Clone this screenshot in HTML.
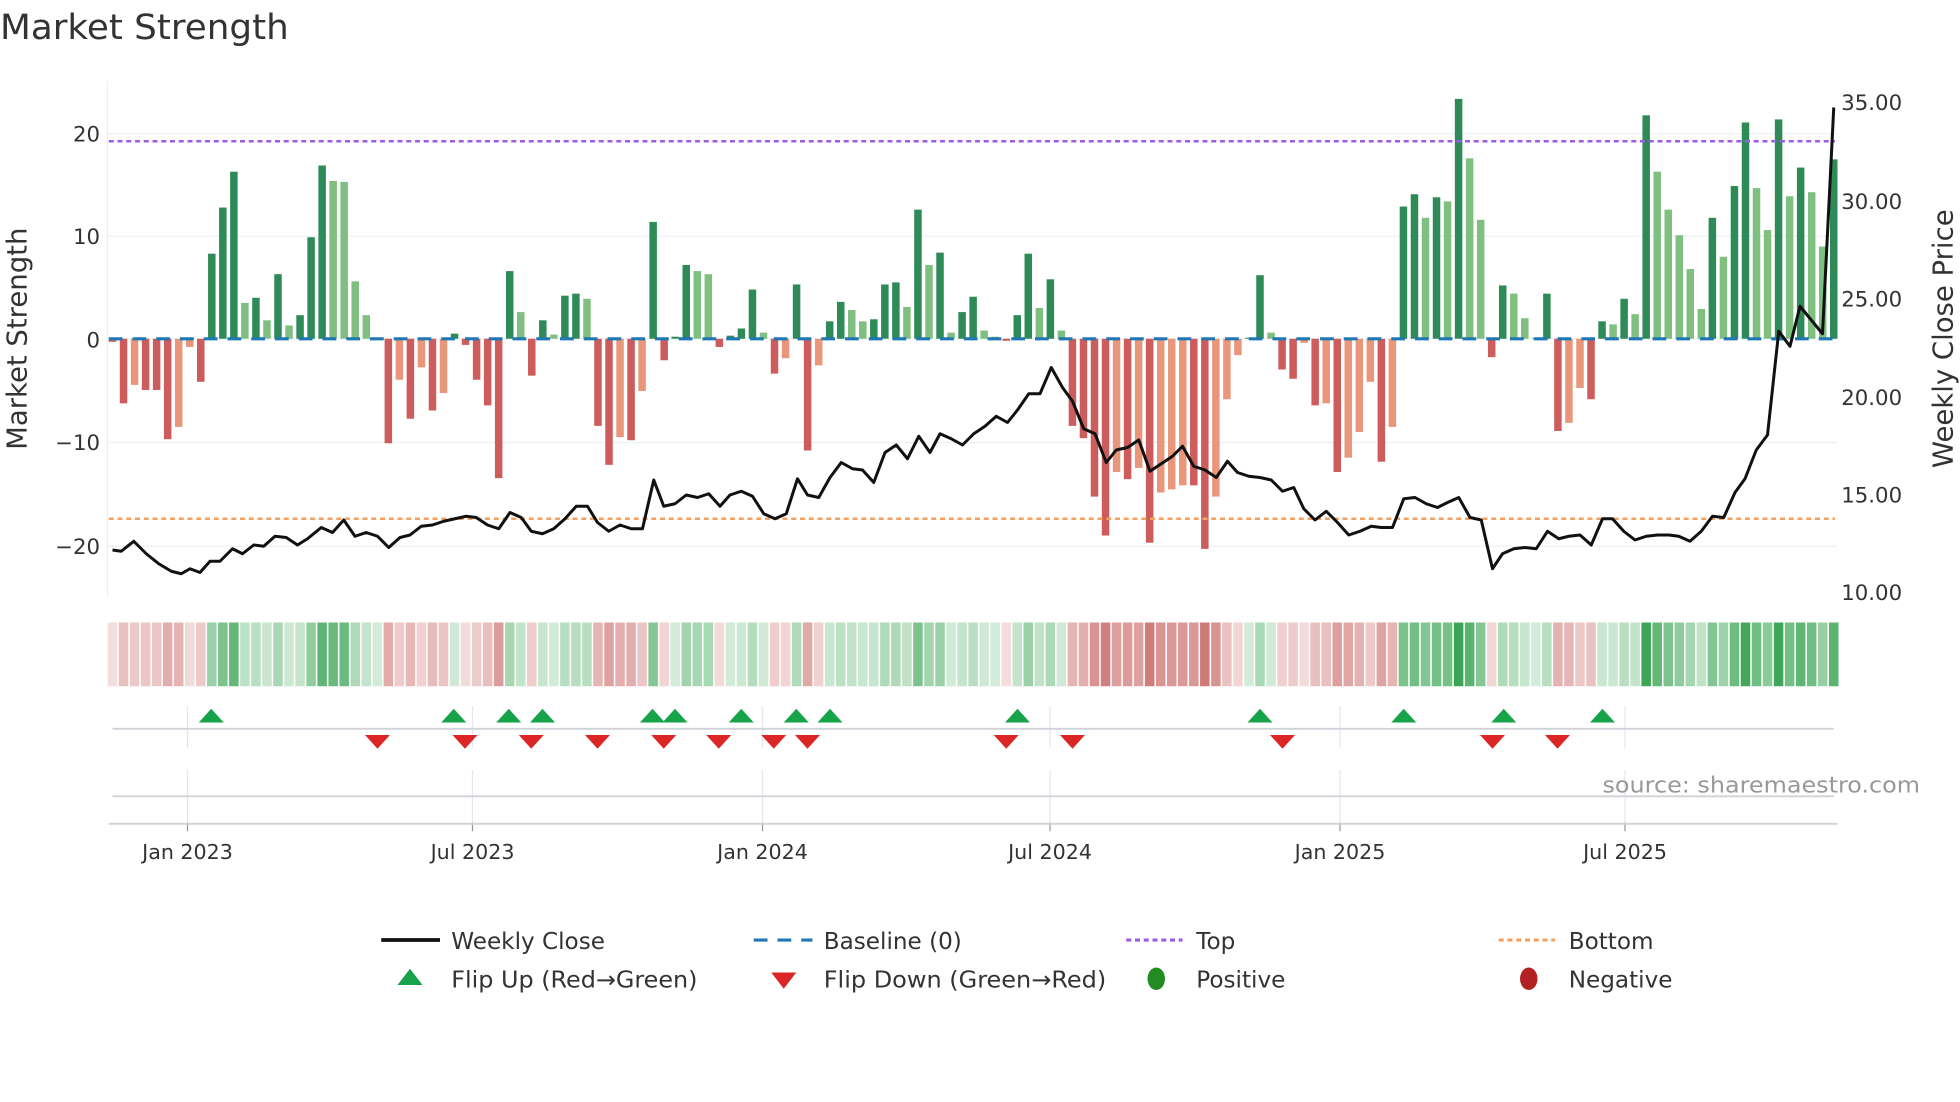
<!DOCTYPE html>
<html><head><meta charset="utf-8"><style>
html,body{margin:0;padding:0;background:#fff;overflow:hidden}
svg{display:block}
text{font-family:"DejaVu Sans","Liberation Sans",sans-serif;fill:#333}
</style></head><body>
<svg id="s" width="1960" height="1102" viewBox="0 0 1568 881.6" xmlns="http://www.w3.org/2000/svg">
<rect width="1568" height="882" fill="#fff"/>
<text x="0" y="31" font-size="28" textLength="231" lengthAdjust="spacingAndGlyphs">Market Strength</text>
<g id="grid"></g>
<g id="bars"></g>
<g id="heat"></g>
<g id="lines"></g>
<g id="marks"></g>
<g font-size="17">
<text x="80" y="113" text-anchor="end">20</text>
<text x="80" y="195" text-anchor="end">10</text>
<text x="80" y="278" text-anchor="end">0</text>
<text x="80" y="360" text-anchor="end">−10</text>
<text x="80" y="443" text-anchor="end">−20</text>
<text x="1473" y="88">35.00</text>
<text x="1473" y="167">30.00</text>
<text x="1473" y="245">25.00</text>
<text x="1473" y="324">20.00</text>
<text x="1473" y="402">15.00</text>
<text x="1473" y="480">10.00</text>
</g>
<text font-size="22" transform="translate(21,271) rotate(-90)" text-anchor="middle">Market Strength</text>
<text font-size="22" transform="translate(1562,271) rotate(-90)" text-anchor="middle">Weekly Close Price</text>
<g font-size="16.5" text-anchor="middle">
<text x="150" y="687">Jan 2023</text>
<text x="378" y="687">Jul 2023</text>
<text x="610" y="687">Jan 2024</text>
<text x="840" y="687">Jul 2024</text>
<text x="1072" y="687">Jan 2025</text>
<text x="1300" y="687">Jul 2025</text>
</g>
<text x="1536" y="634" font-size="18" text-anchor="end" textLength="254" lengthAdjust="spacingAndGlyphs" style="fill:#999">source: sharemaestro.com</text>
<g font-size="18.5">
<line x1="305" y1="752" x2="352" y2="752" stroke="#111" stroke-width="3"/>
<text x="361" y="759">Weekly Close</text>
<line x1="603" y1="752" x2="650" y2="752" stroke="#1f77b4" stroke-width="2.5" stroke-dasharray="11,8"/>
<text x="659" y="759">Baseline (0)</text>
<line x1="901" y1="752" x2="946" y2="752" stroke="#9b5de5" stroke-width="2.5" stroke-dasharray="4,3"/>
<text x="957" y="759">Top</text>
<line x1="1199" y1="752" x2="1244" y2="752" stroke="#f4a261" stroke-width="2.5" stroke-dasharray="4,3"/>
<text x="1255" y="759">Bottom</text>
<polygon points="328,775 338,788 318,788" fill="#16a34a"/>
<text x="361" y="790" textLength="197" lengthAdjust="spacingAndGlyphs">Flip Up (Red→Green)</text>
<polygon points="617,778 637,778 627,791" fill="#dc2626"/>
<text x="659" y="790" textLength="226" lengthAdjust="spacingAndGlyphs">Flip Down (Green→Red)</text>
<ellipse cx="925" cy="783" rx="7" ry="9" fill="#228b22"/>
<text x="957" y="790">Positive</text>
<ellipse cx="1223" cy="783" rx="7" ry="9" fill="#b22222"/>
<text x="1255" y="790">Negative</text>
</g>
</svg>
<script>
var V=[-0.3,-6.3,-4.5,-5,-5,-9.8,-8.6,-0.8,-4.2,8.3,12.8,16.3,3.5,4,1.8,6.3,1.3,2.3,9.9,16.9,15.4,15.3,5.6,2.3,0.1,-10.2,-4,-7.8,-2.8,-7,-5.3,0.5,-0.6,-4,-6.5,-13.6,6.6,2.6,-3.6,1.8,0.4,4.2,4.4,3.9,-8.5,-12.3,-9.6,-9.9,-5.1,11.4,-2.1,0.2,7.2,6.6,6.3,-0.8,0.3,1,4.8,0.6,-3.4,-1.9,5.3,-10.9,-2.6,1.7,3.6,2.8,1.7,1.9,5.3,5.5,3.1,12.6,7.2,8.4,0.6,2.6,4.1,0.8,0.2,-0.2,2.3,8.3,3,5.8,0.8,-8.5,-9.7,-15.4,-19.2,-13,-13.7,-12.6,-19.9,-15,-14.7,-14.3,-14.3,-20.5,-15.4,-5.9,-1.6,0.1,6.2,0.6,-3,-3.9,-0.4,-6.5,-6.3,-13,-11.6,-9.1,-4.2,-12,-8.6,12.9,14.1,11.8,13.8,13.4,23.4,17.6,11.6,-1.8,5.2,4.4,2,0.1,4.4,-9,-8.2,-4.8,-5.9,1.7,1.4,3.9,2.4,21.8,16.3,12.6,10.1,6.8,2.9,11.8,8,14.9,21.1,14.7,10.6,21.4,13.9,16.7,14.3,9,17.5];
var P=[[90,440],[97,441],[107,433],[117,443],[127,451],[137,457],[145,459],[152,455],[160,458],[168,449],[176,449],[186,439],[194,443],[203,436],[211,437],[220,429],[229,430],[238,436],[246,431],[257,422],[266,426],[275,416],[284,429],[293,426],[302,429],[311,438],[320,430],[328,428],[337,421],[346,420],[355,417],[364,415],[373,413],[381,414],[390,420],[399,423],[408,410],[417,414],[425,425],[434,427],[443,423],[452,415],[461,405],[470,405],[478,418],[487,425],[496,420],[505,423],[514,423],[523,384],[531,405],[540,403],[549,396],[558,398],[567,395],[576,405],[584,396],[593,393],[602,397],[611,411],[620,415],[629,411],[638,383],[646,396],[655,398],[664,382],[673,370],[682,375],[690,376],[699,386],[708,362],[717,356],[726,367],[735,349],[744,362],[752,347],[761,351],[770,356],[779,347],[788,341],[797,333],[806,338],[814,328],[823,315],[832,315],[841,294],[850,310],[858,321],[867,343],[876,347],[885,370],[893,360],[902,358],[911,352],[920,377],[929,371],[938,365],[946,357],[955,373],[964,376],[973,382],[982,369],[990,378],[999,381],[1008,382],[1017,384],[1026,393],[1035,390],[1043,407],[1052,416],[1061,409],[1070,418],[1079,428],[1088,425],[1097,421],[1105,422],[1114,422],[1123,399],[1132,398],[1141,403],[1150,406],[1158,402],[1167,398],[1176,414],[1185,416],[1194,455],[1202,443],[1211,439],[1220,438],[1229,439],[1238,425],[1247,431],[1255,429],[1264,428],[1273,436],[1282,415],[1290,415],[1299,425],[1308,432],[1317,429],[1326,428],[1335,428],[1343,429],[1352,433],[1361,425],[1370,413],[1379,414],[1388,394],[1396,383],[1405,360],[1414,348],[1423,265],[1432,277],[1440,245],[1449,256],[1458,267],[1467,86]];
var NS="http://www.w3.org/2000/svg";
function el(g,t,a){var e=document.createElementNS(NS,t);for(var k in a)e.setAttribute(k,a[k]);document.getElementById(g).appendChild(e);return e;}
function mix(c1,c2,t){return 'rgb('+[0,1,2].map(function(j){return Math.round(c1[j]+(c2[j]-c1[j])*t)}).join(',')+')';}
var x0=90,dx=(1467-90)/(V.length-1),y0=271,k=8.2;
[107,189,271,354,437].forEach(function(y){el('grid','line',{x1:87,x2:1470,y1:y,y2:y,stroke:'#eceff4','stroke-width':1});});
el('grid','line',{x1:86,x2:86,y1:65,y2:478,stroke:'#eef0f3','stroke-width':1});
[150,378,610,840,1072,1300].forEach(function(x){
 el('grid','line',{x1:x,x2:x,y1:565,y2:598,stroke:'#e3e6ea','stroke-width':1});
 el('grid','line',{x1:x,x2:x,y1:616,y2:658,stroke:'#e3e6ea','stroke-width':1});
 el('grid','line',{x1:x,x2:x,y1:658,y2:665,stroke:'#999','stroke-width':1});
});
el('grid','line',{x1:90,x2:1467,y1:583,y2:583,stroke:'#cfd3d8','stroke-width':1.5});
el('grid','line',{x1:90,x2:1467,y1:637,y2:637,stroke:'#cfd3d8','stroke-width':1.5});
el('grid','line',{x1:87,x2:1470,y1:659,y2:659,stroke:'#cfd3d8','stroke-width':1.5});
for(var i=0;i<V.length;i++){
 var v=V[i],p=i?V[i-1]:0,x=x0+i*dx,c;
 if(v>=0)c=(v>=p)?'#2e8b57':'#7fbf7f';else c=(v<=p)?'#cd5c5c':'#e9967a';
 var h=Math.abs(v)*k;
 el('bars','rect',{x:x-3,y:v>=0?y0-h:y0,width:6,height:Math.max(h,0.5),fill:c});
 var hc=v>=0?mix([212,236,218],[60,165,85],Math.min(1,Math.abs(v)/22)):mix([245,222,222],[205,120,118],Math.min(1,Math.abs(v)/21));
 el('heat','rect',{x:x-dx/2+0.6,y:498,width:dx-1.2,height:51,fill:hc});
}
el('lines','line',{x1:87,x2:1470,y1:y0,y2:y0,stroke:'#1f77b4','stroke-width':2.5,'stroke-dasharray':'11,8'});
el('lines','line',{x1:87,x2:1468,y1:113,y2:113,stroke:'#9b5de5','stroke-width':2,'stroke-dasharray':'4,3'});
el('lines','line',{x1:87,x2:1468,y1:415,y2:415,stroke:'#f4a261','stroke-width':2,'stroke-dasharray':'4,3'});
el('lines','polyline',{points:P.map(function(q){return q.join(',')}).join(' '),fill:'none',stroke:'#111','stroke-width':2.4,'stroke-linejoin':'round'});
[169,363,407,434,522,540,593,637,664,814,1008,1123,1203,1282].forEach(function(x){el('marks','polygon',{points:(x)+',567 '+(x+10)+',578 '+(x-10)+',578',fill:'#16a34a'});});
[302,372,425,478,531,575,619,646,805,858,1026,1194,1246].forEach(function(x){el('marks','polygon',{points:(x-10)+',588 '+(x+10)+',588 '+x+',599',fill:'#dc2626'});});
</script>
</body></html>
